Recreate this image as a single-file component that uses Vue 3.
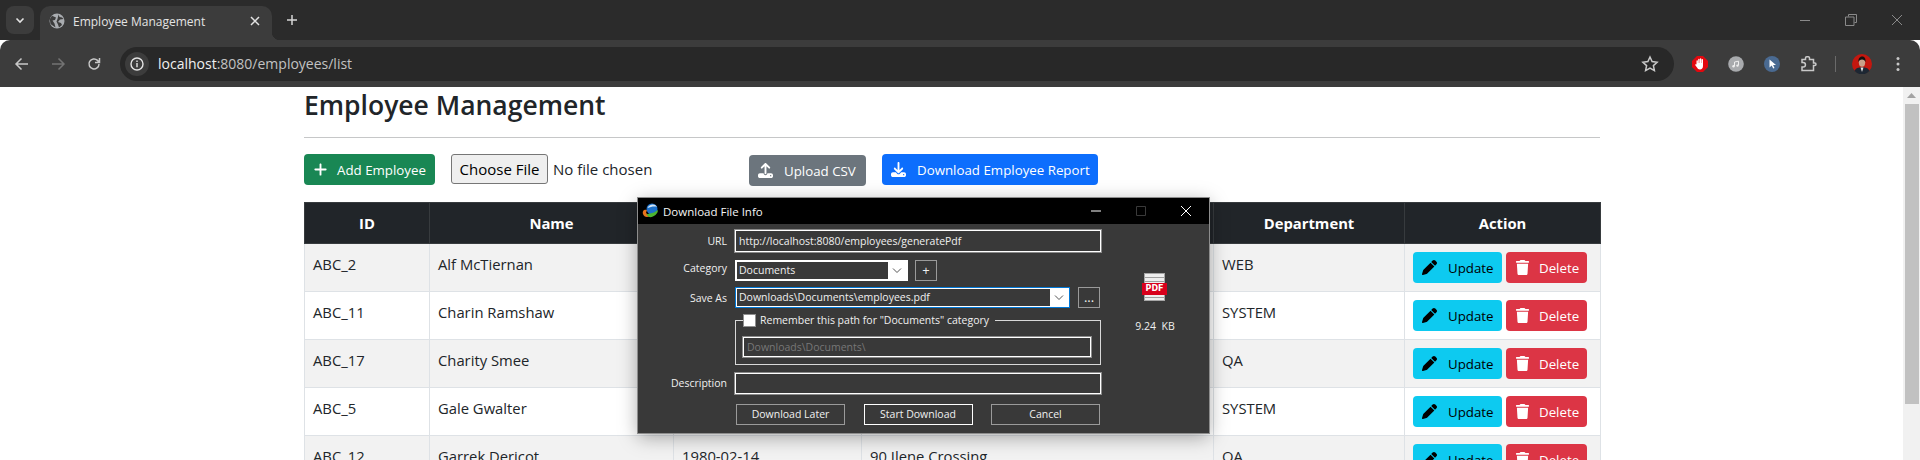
<script setup>
const rows = [
  { id: "ABC_2", name: "Alf McTiernan", dob: "", address: "", dept: "WEB" },
  { id: "ABC_11", name: "Charin Ramshaw", dob: "", address: "", dept: "SYSTEM" },
  { id: "ABC_17", name: "Charity Smee", dob: "", address: "", dept: "QA" },
  { id: "ABC_5", name: "Gale Gwalter", dob: "", address: "", dept: "SYSTEM" },
  { id: "ABC_12", name: "Garrek Dericot", dob: "1980-02-14", address: "90 Ilene Crossing", dept: "QA" },
];

const icons = {
  plus: { box: "0 0 448 512", d: "M256 80c0-17.7-14.3-32-32-32s-32 14.3-32 32V224H48c-17.7 0-32 14.3-32 32s14.3 32 32 32H192V432c0 17.7 14.3 32 32 32s32-14.3 32-32V288H400c17.7 0 32-14.3 32-32s-14.3-32-32-32H256V80z" },
  upload: { box: "0 0 512 512", d: "M288 109.3V352c0 17.7-14.3 32-32 32s-32-14.3-32-32V109.3l-73.4 73.4c-12.5 12.5-32.8 12.5-45.3 0s-12.5-32.8 0-45.3l128-128c12.5-12.5 32.8-12.5 45.3 0l128 128c12.5 12.5 12.5 32.8 0 45.3s-32.8 12.5-45.3 0L288 109.3zM64 352H192c0 35.3 28.7 64 64 64s64-28.7 64-64H448c35.3 0 64 28.7 64 64v32c0 35.3-28.7 64-64 64H64c-35.3 0-64-28.7-64-64V416c0-35.3 28.7-64 64-64zM432 456a24 24 0 1 0 0-48 24 24 0 1 0 0 48z" },
  download: { box: "0 0 512 512", d: "M288 32c0-17.7-14.3-32-32-32s-32 14.3-32 32V274.7l-73.4-73.4c-12.5-12.5-32.8-12.5-45.3 0s-12.5 32.8 0 45.3l128 128c12.5 12.5 32.8 12.5 45.3 0l128-128c12.5-12.5 12.5-32.8 0-45.3s-32.8-12.5-45.3 0L288 274.7V32zM64 352c-35.3 0-64 28.7-64 64v32c0 35.3 28.7 64 64 64H448c35.3 0 64-28.7 64-64V416c0-35.3-28.7-64-64-64H346.5l-45.3 45.3c-25 25-65.5 25-90.5 0L165.5 352H64zm368 56a24 24 0 1 1 0 48 24 24 0 1 1 0-48z" },
  pen: { box: "0 0 512 512", d: "M362.7 19.3L314.3 67.7 444.3 197.7l48.4-48.4c25-25 25-65.5 0-90.5L453.3 19.3c-25-25-65.5-25-90.5 0zm-71 71L58.6 323.5c-10.4 10.4-18 23.3-22.2 37.4L1 481.2C-1.5 489.7 .8 498.8 7 505s15.3 8.5 23.7 6.1l120.3-35.4c14.1-4.2 27-11.8 37.4-22.2L421.7 220.3 291.7 90.3z" },
  trash: { box: "0 0 448 512", d: "M135.2 17.7L128 32H32C14.3 32 0 46.3 0 64S14.3 96 32 96H416c17.7 0 32-14.3 32-32s-14.3-32-32-32H320l-7.2-14.3C307.4 6.8 296.3 0 284.2 0H163.8c-12.1 0-23.2 6.8-28.6 17.7zM416 128H32L53.2 467c1.6 25.3 22.6 45 47.9 45H346.9c25.3 0 46.3-19.7 47.9-45L416 128z" },
};
</script>

<template>
  <div class="screen">
    <div class="tabstrip">
      <div class="tab-search">
        <svg width="12" height="12" viewBox="0 0 12 12"><path d="M2.500 4.500 6 8l3.500-3.500" fill="none" stroke="#e3e3e3" stroke-width="1.600" /></svg>
      </div>
      <div class="tab">
        <svg class="globe" width="16" height="16" viewBox="0 0 16 16">
          <circle cx="8" cy="8" r="7.500" fill="#a9acb0" />
          <path d="M3 2.800 7 4.500 6 7 3.500 7.500 5.500 10.500 6.500 14.500 1.500 11 .8 6ZM9.500 1.500 10.500 4 13 4.500 14.500 6 11 6.500 9 9 12 10 13 12 10 14.500 9 11.500 7.500 8.500 8.500 6Z" fill="#3c3c3c" />
        </svg>
        <span class="tab-title">Employee Management</span>
        <svg class="tab-x" width="10" height="10" viewBox="0 0 10 10"><path d="M1 1l8 8M9 1l-8 8" stroke="#e3e3e3" stroke-width="1.500" /></svg>
      </div>
      <svg class="newtab" width="12" height="12" viewBox="0 0 12 12"><path d="M6 1v10M1 6h10" stroke="#d6d6d6" stroke-width="1.500" /></svg>
      <div class="winctl">
        <svg width="12" height="12" viewBox="0 0 12 12"><path d="M1 6.500h10" stroke="#8a8a8a" /></svg>
        <svg width="12" height="12" viewBox="0 0 12 12"><path d="M3.500 2.500V.5h8v8h-2M.5 3h8.500v8.500H.5z" fill="none" stroke="#8a8a8a" /></svg>
        <svg width="12" height="12" viewBox="0 0 12 12"><path d="M1 1l10 10M11 1 1 11" stroke="#8a8a8a" /></svg>
      </div>
    </div>

    <div class="toolbar">
      <svg class="nav" width="16" height="16" viewBox="0 0 16 16"><path d="M14 8H2.500M7.500 2.500 2 8l5.500 5.500" fill="none" stroke="#c8c8c8" stroke-width="1.500" /></svg>
      <svg class="nav" width="16" height="16" viewBox="0 0 16 16"><path d="M2 8h11.500M8.500 2.500 14 8l-5.500 5.500" fill="none" stroke="#737373" stroke-width="1.500" /></svg>
      <svg class="nav" width="16" height="16" viewBox="0 0 16 16"><path d="M13 8a5 5 0 1 1-1.500-3.600L13.500 6.500M13.500 2v4.500H9" fill="none" stroke="#c8c8c8" stroke-width="1.500" /></svg>
      <div class="omnibox">
        <span class="site-info">
          <svg width="14" height="14" viewBox="0 0 14 14">
            <circle cx="7" cy="7" r="6" fill="none" stroke="#e3e3e3" stroke-width="1.400" />
            <path d="M7 6v4.200M7 3.500v1.400" stroke="#e3e3e3" stroke-width="1.400" />
          </svg>
        </span>
        <span class="url"><b>localhost</b>:8080/employees/list</span>
        <svg class="star" width="18" height="18" viewBox="0 0 18 18"><path d="m9 2 2.100 4.600 5 .6-3.700 3.400 1 5L9 13.100l-4.400 2.500 1-5L1.900 7.200l5-.6z" fill="none" stroke="#c8c8c8" stroke-width="1.500" /></svg>
      </div>
      <div class="ext-row">
        <svg class="ext" width="16" height="16" viewBox="0 0 16 16">
          <path d="M5 0h6l5 5v6l-5 5H5l-5-5V5z" fill="#e2080f" />
          <path d="M4.500 8.500V5a.7.7 0 0 1 1.400 0V7h.3V3.500a.7.7 0 0 1 1.400 0V7h.3V3a.7.7 0 0 1 1.400 0V7h.3V3.800a.7.7 0 0 1 1.400 0V10c0 2-1.200 3.500-3 3.500-1.500 0-2.400-.8-3-2L3.300 9.300c-.4-.8.500-1.300 1.200-.8z" fill="#fff" />
        </svg>
        <svg class="ext" width="16" height="16" viewBox="0 0 16 16">
          <circle cx="8" cy="8" r="7.800" fill="#a8aaad" />
          <path d="M6.500 10V6l4-.8v4" fill="none" stroke="#eee" />
          <circle cx="5.500" cy="10.300" r="1.200" fill="#eee" /><circle cx="9.500" cy="9.600" r="1.200" fill="#eee" />
        </svg>
        <svg class="ext" width="16" height="16" viewBox="0 0 16 16">
          <circle cx="8" cy="8" r="8" fill="#4a6a91" />
          <path d="M5.500 3.500v8l2.200-2 1.500 3 1.300-.6-1.400-2.900h2.900z" fill="#fff" />
        </svg>
        <svg class="ext puzzle" width="18" height="18" viewBox="0 0 18 18">
          <path d="M2 4.500h3.500V3a1.200 1.200 0 0 1 1.200-1.200h1.500A1.200 1.200 0 0 1 9.500 3v1.500h4v3.600h1.300a1.200 1.200 0 0 1 0 2.400h-1.300v5H2V12h1.200a2 2 0 0 0 0-4.500H2z" fill="none" stroke="#c8c8c8" stroke-width="1.500" />
        </svg>
        <span class="sep"></span>
        <svg class="avatar" width="20" height="20" viewBox="0 0 20 20">
          <circle cx="10" cy="10" r="10" fill="#c4170f" />
          <path d="M2.500 17c1-3 4-3.800 7.500-3.800s6.500.8 7.500 3.800A10 10 0 0 1 2.500 17z" fill="#1d2733" />
          <path d="M8.500 13.500h3L10 18z" fill="#e6e6e6" />
          <ellipse cx="10" cy="8.500" rx="3.200" ry="4.200" fill="#c9a08a" />
          <path d="M6.500 8c-.5-4 2-5.500 3.800-5.500S14 4 13.500 8c-1-1.800-2-2.500-3.500-2.500S7.500 6.200 6.500 8z" fill="#15110f" />
        </svg>
        <svg class="menu" width="6" height="16" viewBox="0 0 6 16">
          <circle cx="3" cy="2.500" r="1.500" fill="#c8c8c8" /><circle cx="3" cy="8" r="1.500" fill="#c8c8c8" /><circle cx="3" cy="13.500" r="1.500" fill="#c8c8c8" />
        </svg>
      </div>
    </div>

    <div class="viewport">
      <main class="page">
        <h2 class="heading">Employee Management</h2>
        <hr class="rule" />
        <div class="actions">
          <button class="btn btn-green">
            <svg class="ico" :viewBox="icons.plus.box"><path :d="icons.plus.d" /></svg>Add Employee
          </button>
          <div class="file-input">
            <span class="file-btn">Choose File</span><span class="file-none">No file chosen</span>
          </div>
          <button class="btn btn-grey">
            <svg class="ico" :viewBox="icons.upload.box"><path :d="icons.upload.d" /></svg>Upload CSV
          </button>
          <button class="btn btn-blue">
            <svg class="ico" :viewBox="icons.download.box"><path :d="icons.download.d" /></svg>Download Employee Report
          </button>
        </div>

        <table class="emp-table">
          <colgroup>
            <col class="col-id" />
            <col class="col-name" />
            <col class="col-dob" />
            <col class="col-addr" />
            <col class="col-dept" />
            <col class="col-act" />
          </colgroup>
          <thead>
            <tr>
              <th>ID</th>
              <th>Name</th>
              <th></th>
              <th></th>
              <th>Department</th>
              <th>Action</th>
            </tr>
          </thead>
          <tbody>
            <tr v-for="row in rows" :key="row.id">
              <td>{{ row.id }}</td>
              <td>{{ row.name }}</td>
              <td>{{ row.dob }}</td>
              <td>{{ row.address }}</td>
              <td>{{ row.dept }}</td>
              <td class="td-actions">
                <div class="row-actions">
                  <button class="btn btn-cyan">
                    <svg class="ico" :viewBox="icons.pen.box"><path :d="icons.pen.d" /></svg>Update
                  </button>
                  <button class="btn btn-red">
                    <svg class="ico" :viewBox="icons.trash.box"><path :d="icons.trash.d" /></svg>Delete
                  </button>
                </div>
              </td>
            </tr>
          </tbody>
        </table>
      </main>
      <div class="scrollbar">
        <svg width="9" height="5" viewBox="0 0 9 5"><path d="M4.500 0 9 5H0z" fill="#a3a3a3" /></svg>
        <div class="thumb"></div>
      </div>

      <section class="idm">
        <header class="idm-title">
          <svg width="17" height="16" viewBox="0 0 17 16">
            <path d="M1 11C0 7 3 6 5 7l-1 3 4 3c-3 2-6 1-7-2z" fill="#e8731c" />
            <circle cx="10" cy="6" r="5.500" fill="#1c70c9" />
            <path d="M5.500 5C7 1 13 0 15 4c-3-1-6 0-9.500 1z" fill="#d4e5f5" />
            <path d="M4 11.500 12 9.500 16 7c0 4-5 8-9 7z" fill="#4cb52f" />
          </svg>
          <span class="idm-caption">Download File Info</span>
          <div class="idm-ctl">
            <svg width="10" height="10" viewBox="0 0 10 10"><path d="M0 5h10" stroke="#fff" /></svg>
            <svg width="10" height="10" viewBox="0 0 10 10"><path d="M.5.500h9v9h-9z" fill="none" stroke="#3a3a3a" /></svg>
            <svg width="10" height="10" viewBox="0 0 10 10"><path d="M0 0l10 10M10 0 0 10" stroke="#fff" /></svg>
          </div>
        </header>
        <div class="idm-body">
          <div class="idm-form">
            <label class="idm-label">URL</label>
            <div class="field url-field">http://localhost:8080/employees/generatePdf</div>

            <label class="idm-label label-cat">Category</label>
            <div class="cat-row">
              <div class="combo cat-combo">
                <span class="combo-text">Documents</span>
                <svg class="chev" width="9" height="5" viewBox="0 0 9 5"><path d="M.5.500l4 4 4-4" fill="none" stroke="#555" /></svg>
              </div>
              <span class="mini-btn">+</span>
            </div>

            <label class="idm-label label-low">Save As</label>
            <div class="save-row">
              <div class="combo save-combo">
                <span class="combo-text">Downloads\Documents\employees.pdf</span>
                <svg class="chev" width="9" height="5" viewBox="0 0 9 5"><path d="M.5.500l4 4 4-4" fill="none" stroke="#555" /></svg>
              </div>
              <span class="mini-btn dots">...</span>
            </div>

            <span></span>
            <fieldset class="group">
              <legend class="group-legend"><span class="check"></span>Remember this path for "Documents" category</legend>
              <div class="field field-off">Downloads\Documents\</div>
            </fieldset>

            <label class="idm-label label-low">Description</label>
            <div class="field desc-field"></div>

            <span></span>
            <div class="idm-btns">
              <span class="idm-btn">Download Later</span>
              <span class="idm-btn idm-btn-main">Start Download</span>
              <span class="idm-btn">Cancel</span>
            </div>
          </div>
          <aside class="idm-file">
            <div class="pdf-icon">
              <div class="pdf-sheet"></div>
              <span class="pdf-tag">PDF</span>
            </div>
            <span class="idm-size">9.24&nbsp; KB</span>
          </aside>
        </div>
      </section>
    </div>
  </div>
</template>

<style>
html,
body {
  margin: 0;
  overflow: hidden;
  background: #fff;
}
</style>

<style scoped>
.screen {
  width: 1920px;
  height: 460px;
  display: flex;
  flex-direction: column;
  overflow: hidden;
  font-family: "Open Sans", "Noto Sans", sans-serif;
}

/* browser frame */
.tabstrip {
  height: 40px;
  flex: none;
  background: #2b2b2b;
  display: flex;
  align-items: flex-end;
  padding-left: 6px;
  position: relative;
}
.tab-search {
  width: 28px;
  height: 28px;
  margin-bottom: 6px;
  border-radius: 8px;
  background: #3c3c3c;
  display: flex;
  align-items: center;
  justify-content: center;
}
.tab {
  width: 232px;
  height: 34px;
  margin-left: 6px;
  background: #3c3c3c;
  border-radius: 10px 10px 0 0;
  display: flex;
  align-items: center;
  padding: 0 12px 4px 9px;
  box-sizing: border-box;
  position: relative;
}
.tab::after {
  content: "";
  position: absolute;
  right: -8px;
  bottom: 0;
  width: 8px;
  height: 8px;
  background: radial-gradient(circle at 100% 0, transparent 8px, #3c3c3c 8.5px);
}
.tab-title {
  margin-left: 8px;
  flex: 1;
  font-size: 12px;
  color: #e3e3e3;
}
.newtab {
  margin: 0 0 14px 14px;
}
.winctl {
  margin-left: auto;
  height: 40px;
  display: flex;
  align-items: center;
  gap: 34px;
  padding-right: 17px;
  align-self: flex-start;
}
.toolbar {
  height: 47px;
  flex: none;
  background: #3c3c3c;
  border-radius: 10px 10px 0 0;
  display: flex;
  align-items: center;
  padding-left: 14px;
  box-sizing: border-box;
}
.nav {
  margin-right: 20px;
}
.omnibox {
  width: 1554px;
  height: 34px;
  border-radius: 17px;
  background: #282828;
  display: flex;
  align-items: center;
  padding-left: 5px;
  box-sizing: border-box;
  margin-left: -2px;
}
.site-info {
  width: 24px;
  height: 24px;
  border-radius: 50%;
  background: #3c3c3c;
  display: flex;
  align-items: center;
  justify-content: center;
}
.url {
  margin-left: 9px;
  flex: 1;
  font-size: 14px;
  color: #c2c2c2;
}
.url b {
  font-weight: 400;
  color: #f0f0f0;
}
.star {
  margin-right: 15px;
}
.ext-row {
  display: flex;
  align-items: center;
  margin-left: 18px;
}
.ext {
  margin-right: 20px;
}
.puzzle {
  margin-right: 17px;
}
.sep {
  width: 1px;
  height: 16px;
  background: #6a6a6a;
  margin-right: 16px;
}
.menu {
  margin-left: 23px;
}

/* page */
.viewport {
  flex: 1;
  min-height: 0;
  position: relative;
  display: flex;
  background: #fff;
  overflow: hidden;
}
.page {
  flex: 1;
  padding: 0 303px 0 304px;
  box-sizing: border-box;
  min-width: 0;
}
.heading {
  margin: 0;
  font-size: 26.500px;
  line-height: 36px;
  font-weight: 600;
  color: #212529;
}
.rule {
  margin: 14px 0 16px;
  border: 0;
  border-top: 1px solid #c6c7c8;
}
.actions {
  display: flex;
  align-items: flex-start;
  height: 32px;
}
.btn {
  display: inline-flex;
  align-items: center;
  height: 31px;
  border: 0;
  border-radius: 4px;
  padding: 0 0 0 9px;
  font-family: inherit;
  font-size: 13.300px;
  color: #fff;
  white-space: nowrap;
  box-sizing: border-box;
}
.ico {
  width: 15px;
  height: 15px;
  margin-right: 11px;
  fill: currentColor;
  flex: none;
}
.btn-green {
  width: 131px;
  background: #198754;
}
.btn-green .ico {
  margin-right: 9px;
}
.btn-grey {
  width: 117px;
  background: #6c757d;
  margin: 1px 0 0 26px;
}
.btn-blue {
  width: 216px;
  background: #0d6efd;
  margin-left: 16px;
}
.btn-cyan {
  width: 89px;
  background: #0dcaf0;
  color: #000;
}
.btn-red {
  width: 81px;
  background: #dc3545;
  margin-left: 4px;
}
.btn-red .ico {
  margin-right: 9px;
}
.file-input {
  width: 272px;
  margin-left: 16px;
  display: flex;
  align-items: center;
  font-size: 15px;
  color: #212529;
}
.file-btn {
  box-sizing: border-box;
  width: 97px;
  height: 30px;
  line-height: 28px;
  text-align: center;
  border: 1px solid #767676;
  border-radius: 3px;
  background: #efefef;
  color: #000;
}
.file-none {
  margin-left: 5px;
}
.emp-table {
  table-layout: fixed;
  width: 1296px;
  margin-top: 16px;
  border-collapse: collapse;
  font-size: 14.800px;
  color: #212529;
}
.col-id {
  width: 125px;
}
.col-name {
  width: 244px;
}
.col-dob {
  width: 188px;
}
.col-addr {
  width: 352px;
}
.col-dept {
  width: 191px;
}
.col-act {
  width: 196px;
}
.emp-table th {
  box-sizing: border-box;
  height: 41px;
  padding: 0 8px;
  background: #212529;
  color: #fff;
  font-weight: 700;
  text-align: center;
  border: 1px solid #373b3e;
}
.emp-table td {
  box-sizing: border-box;
  height: 48px;
  padding: 10px 8px 0;
  line-height: 21px;
  vertical-align: top;
  border: 1px solid #dee2e6;
  white-space: nowrap;
}
.emp-table td.td-actions {
  padding-top: 8px;
}
.emp-table tbody tr:nth-child(odd) td {
  background: #f2f2f2;
}
.row-actions {
  display: flex;
}
.scrollbar {
  width: 17px;
  flex: none;
  background: #f1f1f1;
  display: flex;
  flex-direction: column;
  align-items: center;
  padding-top: 6px;
  box-sizing: border-box;
}
.thumb {
  width: 14px;
  height: 300px;
  margin-top: 6px;
  background: #c1c1c1;
}

/* download dialog */
.idm {
  position: absolute;
  left: 638px;
  top: 111px;
  width: 571px;
  height: 235px;
  background: #393939;
  box-shadow: 0 0 0 1px #8d8d8d, 0 4px 18px rgba(0, 0, 0, 0.35);
  color: #f0f0f0;
  font-size: 10.500px;
}
.idm-title {
  height: 26px;
  background: #000;
  display: flex;
  align-items: center;
  padding: 0 18px 0 4px;
}
.idm-caption {
  margin-left: 4px;
  font-size: 11.500px;
  color: #f5f5f5;
}
.idm-ctl {
  margin-left: auto;
  display: flex;
  gap: 35px;
}
.idm-body {
  display: flex;
}
.idm-form {
  width: 463px;
  padding: 6px 0 0;
  display: grid;
  grid-template-columns: 97px 366px;
  align-items: center;
}
.idm-label {
  text-align: right;
  padding-right: 8px;
  color: #f0f0f0;
}
.label-cat {
  margin-top: 2px;
}
.label-low {
  margin-top: 6px;
}
.field {
  box-sizing: border-box;
  border: 1px solid #fff;
  outline: 1px solid #8a8a8a;
  line-height: 20px;
  padding-left: 3px;
  background: #393939;
}
.url-field {
  height: 22px;
}
.cat-row {
  display: flex;
  margin-top: 8px;
}
.combo {
  box-sizing: border-box;
  display: flex;
  align-items: center;
  background: #fff;
  border: 2px solid #fff;
  height: 21px;
}
.combo-text {
  flex: 1;
  height: 100%;
  background: #393939;
  padding-left: 2px;
  line-height: 17px;
}
.chev {
  width: 18px;
  flex: none;
}
.cat-combo {
  width: 173px;
}
.save-row {
  display: flex;
  margin-top: 6px;
}
.save-combo {
  width: 335px;
  border: 1px solid #0078d7;
  padding: 1px;
}
.mini-btn {
  box-sizing: border-box;
  width: 22px;
  height: 21px;
  margin-left: 7px;
  border: 1px solid #9a9a9a;
  text-align: center;
  line-height: 18px;
  font-size: 13px;
}
.dots {
  margin-left: 8px;
}
.group {
  margin: 6px 0 0;
  padding: 0 9px 6px 7px;
  height: 51px;
  box-sizing: border-box;
  border: 1px solid #d8d8d8;
  min-width: 0;
}
.group-legend {
  padding: 0 6px 0 0;
  display: flex;
  align-items: center;
  line-height: 13px;
}
.check {
  width: 11px;
  height: 11px;
  margin-right: 4px;
  background: #fff;
  border: 1px solid #8f8f8f;
}
.field-off {
  height: 20px;
  margin-top: 10px;
  color: #777;
  line-height: 18px;
}
.desc-field {
  height: 21px;
  margin-top: 8px;
}
.idm-btns {
  display: flex;
  justify-content: space-between;
  margin-top: 10px;
  padding: 0 1px;
}
.idm-btn {
  box-sizing: border-box;
  width: 109px;
  height: 21px;
  border: 1px solid #9a9a9a;
  text-align: center;
  line-height: 19px;
}
.idm-btn-main {
  border-color: #fff;
}
.idm-file {
  flex: 1;
  display: flex;
  flex-direction: column;
  align-items: center;
  padding-top: 49px;
}
.pdf-icon {
  width: 26px;
  height: 29px;
  position: relative;
}
.pdf-sheet {
  width: 21px;
  height: 28px;
  margin-left: 2px;
  background: repeating-linear-gradient(#eee 0 3px, #9f9f9f 3px 4px);
  border: 1px solid #a6a6a6;
  box-sizing: border-box;
}
.pdf-tag {
  position: absolute;
  left: 0;
  top: 10px;
  width: 25px;
  height: 12px;
  background: #d8001b;
  color: #fff;
  font-family: "DejaVu Sans", sans-serif;
  font-size: 8px;
  line-height: 12px;
  font-weight: 700;
  text-align: center;
}
.idm-size {
  margin-top: 17px;
}
</style>
